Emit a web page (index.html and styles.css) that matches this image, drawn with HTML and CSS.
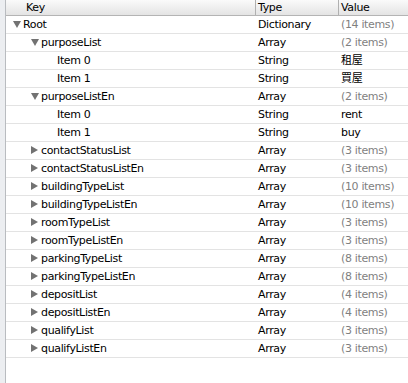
FILE: index.html
```html
<!DOCTYPE html>
<html lang="en">
<head>
  <meta charset="UTF-8">
  <title>Info.plist</title>
  <link rel="stylesheet" href="styles.css">
</head>
<body>
  <div class="editor">
    <div class="gutter"></div>
    <div class="outline">
      <div class="row header">
        <span class="cell key">Key</span>
        <span class="cell type">Type</span>
        <span class="cell value">Value</span>
      </div>
      <div id="rows"></div>
    </div>
  </div>

  <script>
    const plist = [
      ["Root", 0, "open", "Dictionary", "(14 items)"],
      ["purposeList", 1, "open", "Array", "(2 items)"],
      ["Item 0", 2, "", "String", "租屋"],
      ["Item 1", 2, "", "String", "買屋"],
      ["purposeListEn", 1, "open", "Array", "(2 items)"],
      ["Item 0", 2, "", "String", "rent"],
      ["Item 1", 2, "", "String", "buy"],
      ["contactStatusList", 1, "closed", "Array", "(3 items)"],
      ["contactStatusListEn", 1, "closed", "Array", "(3 items)"],
      ["buildingTypeList", 1, "closed", "Array", "(10 items)"],
      ["buildingTypeListEn", 1, "closed", "Array", "(10 items)"],
      ["roomTypeList", 1, "closed", "Array", "(3 items)"],
      ["roomTypeListEn", 1, "closed", "Array", "(3 items)"],
      ["parkingTypeList", 1, "closed", "Array", "(8 items)"],
      ["parkingTypeListEn", 1, "closed", "Array", "(8 items)"],
      ["depositList", 1, "closed", "Array", "(4 items)"],
      ["depositListEn", 1, "closed", "Array", "(4 items)"],
      ["qualifyList", 1, "closed", "Array", "(3 items)"],
      ["qualifyListEn", 1, "closed", "Array", "(3 items)"]
    ];

    const rows = document.getElementById("rows");
    plist.forEach(item => {
      const [name, depth, state, type, value] = item;
      const row = document.createElement("div");
      row.className = "row";

      const key = document.createElement("span");
      key.className = "cell key depth-" + depth;
      if (state) {
        const arrow = document.createElement("span");
        arrow.className = "disclosure " + state;
        key.appendChild(arrow);
      }
      key.appendChild(document.createTextNode(name));

      const typeCell = document.createElement("span");
      typeCell.className = "cell type";
      typeCell.textContent = type;

      const valueCell = document.createElement("span");
      valueCell.className = "cell value";
      if (value.charAt(0) === "(") valueCell.classList.add("count");
      valueCell.textContent = value;

      row.appendChild(key);
      row.appendChild(typeCell);
      row.appendChild(valueCell);
      rows.appendChild(row);
    });
  </script>
</body>
</html>
```

FILE: styles.css
```css
body {
  margin: 0;
  font-family: "DejaVu Sans", "Noto Sans CJK TC", sans-serif;
  font-size: 11px;
  letter-spacing: -0.35px;
  color: #000;
  background-color: #fff;
}
.editor {
  display: flex;
  height: 383px;
  overflow: hidden;
}
.gutter {
  width: 5px;
  background-color: #eceef1;
  border-right: 1px solid #b9bcc0;
}
.outline {
  flex: 1;
}
.row {
  display: grid;
  grid-template-columns: 249px 83px 1fr;
  height: 18px;
  line-height: 17px;
  border-bottom: 1px solid #e3e3e3;
  box-sizing: border-box;
}
.cell {
  white-space: nowrap;
  overflow: hidden;
}
.header {
  height: 16px;
  line-height: 15px;
  background: linear-gradient(#fafafa, #e4e4e4);
  border-bottom: 1px solid #b4b4b4;
}
.header .key {
  padding-left: 20px;
}
.header .type {
  border-left: 1px solid #b0b0b0;
  padding-left: 2px;
}
.header .value {
  border-left: 1px solid #b0b0b0;
  padding-left: 2px;
}
.type {
  padding-left: 3px;
}
.value {
  padding-left: 3px;
}
.value.count {
  color: #7f7f7f;
}
.key {
  display: flex;
  align-items: center;
}
.depth-0 {
  padding-left: 7px;
}
.depth-1 {
  padding-left: 25px;
}
.depth-2 {
  padding-left: 51px;
}
.disclosure {
  width: 9px;
  height: 9px;
  margin-right: 1px;
  position: relative;
}
.disclosure.open::before {
  content: "";
  position: absolute;
  left: 0;
  top: 1px;
  border-left: 4px solid transparent;
  border-right: 4px solid transparent;
  border-top: 7px solid #727272;
}
.disclosure.closed::before {
  content: "";
  position: absolute;
  left: 0;
  top: 0;
  border-top: 4px solid transparent;
  border-bottom: 4px solid transparent;
  border-left: 7px solid #727272;
}
```
